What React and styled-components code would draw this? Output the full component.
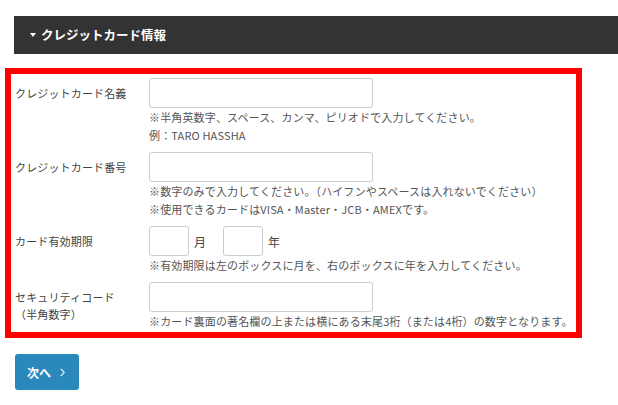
import React from "react";
import styled, { createGlobalStyle } from "styled-components";

const GlobalStyle = createGlobalStyle`
  html, body {
    margin: 0;
    padding: 0;
    background: #fff;
  }
  body {
    font-family: "Noto Sans CJK JP", "Noto Sans", sans-serif;
    color: #333;
  }
  * { box-sizing: border-box; }
`;

const Page = styled.div`
  width: 618px;
  padding-top: 16px;
`;

const SectionBar = styled.div`
  margin-left: 14px;
  height: 38px;
  background: #333;
  display: flex;
  align-items: center;
  padding-left: 16px;
  gap: 5px;
`;

const SectionTitle = styled.h2`
  margin: 0;
  color: #fff;
  font-size: 12.5px;
  font-weight: 700;
  letter-spacing: 0;
  line-height: 1;
`;

const Caret = styled.span`
  width: 0;
  height: 0;
  border-left: 3px solid transparent;
  border-right: 3px solid transparent;
  border-top: 4px solid #fff;
  margin-top: -1px;
`;

const FormBox = styled.div`
  margin: 14px 0 0 5px;
  width: 577px;
  border: 6px solid #f00;
  padding: 4px 0 2px 4px;
  display: flex;
  flex-direction: column;
  gap: 8px;
`;

const Row = styled.div`
  display: grid;
  grid-template-columns: 134px 1fr;
`;

const Label = styled.div`
  font-size: 11px;
  line-height: 17px;
  letter-spacing: 0.15px;
  padding-top: 7px;
  color: #444;
`;

const Field = styled.div`
  display: flex;
  flex-direction: column;
  align-items: flex-start;
`;

const Inline = styled.div`
  display: flex;
  align-items: center;
`;

const TextInput = styled.input`
  width: ${(p) => p.$w}px;
  height: 30px;
  border: 1px solid #ccc;
  border-radius: 3px;
  background: #fff;
  margin: 0;
  padding: 0 6px;
  font: inherit;
  outline: none;
`;

const Unit = styled.span`
  font-size: 12px;
  color: #444;
  margin: 0 ${(p) => p.$after}px 0 5px;
`;

const Hint = styled.p`
  margin: 0;
  font-size: 11px;
  line-height: 18px;
  letter-spacing: 0.15px;
  color: #555;
  white-space: nowrap;
`;

const Actions = styled.div`
  padding: 16px 0 0 15px;
`;

const NextButton = styled.button`
  width: 64px;
  height: 36px;
  border: none;
  border-radius: 3px;
  background: #2a88ba;
  color: #fff;
  font-family: inherit;
  font-size: 12px;
  font-weight: 700;
  display: flex;
  align-items: center;
  padding: 0 0 0 12px;
  gap: 9px;
  cursor: pointer;
`;

const Chevron = () => (
  <svg width="5" height="9" viewBox="0 0 5 9" fill="none">
    <path d="M0.8 0.8 L4.2 4.5 L0.8 8.2" stroke="#fff" strokeWidth="1.1" />
  </svg>
);

export default function App() {
  return (
    <>
      <GlobalStyle />
      <Page>
        <SectionBar>
          <Caret />
          <SectionTitle>クレジットカード情報</SectionTitle>
        </SectionBar>

        <FormBox>
          <Row>
            <Label>クレジットカード名義</Label>
            <Field>
              <TextInput $w={224} />
              <Hint>※半角英数字、スペース、カンマ、ピリオドで入力してください。</Hint>
              <Hint>例：TARO HASSHA</Hint>
            </Field>
          </Row>

          <Row>
            <Label>クレジットカード番号</Label>
            <Field>
              <TextInput $w={224} />
              <Hint>※数字のみで入力してください。（ハイフンやスペースは入れないでください）</Hint>
              <Hint>※使用できるカードはVISA・Master・JCB・AMEXです。</Hint>
            </Field>
          </Row>

          <Row>
            <Label>カード有効期限</Label>
            <Field>
              <Inline>
                <TextInput $w={40} />
                <Unit $after={17}>月</Unit>
                <TextInput $w={40} />
                <Unit $after={0}>年</Unit>
              </Inline>
              <Hint>※有効期限は左のボックスに月を、右のボックスに年を入力してください。</Hint>
            </Field>
          </Row>

          <Row>
            <Label>
              セキュリティコード
              <br />
              （半角数字）
            </Label>
            <Field>
              <TextInput $w={224} />
              <Hint>※カード裏面の著名欄の上または横にある末尾3桁（または4桁）の数字となります。</Hint>
            </Field>
          </Row>
        </FormBox>

        <Actions>
          <NextButton type="button">
            次へ
            <Chevron />
          </NextButton>
        </Actions>
      </Page>
    </>
  );
}
